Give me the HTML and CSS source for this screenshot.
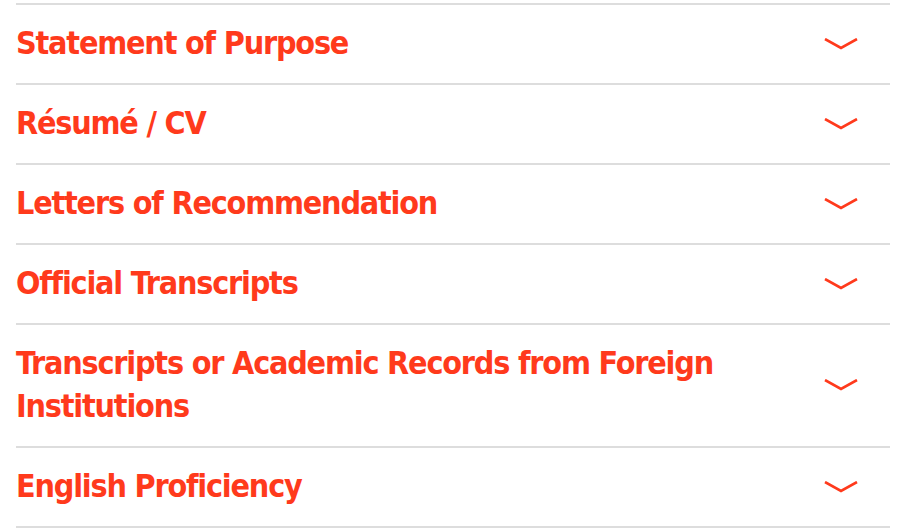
FILE: index.html
```html
<!DOCTYPE html>
<html lang="en">
<head>
  <meta charset="UTF-8">
  <meta name="viewport" content="width=device-width, initial-scale=1.0">
  <title>Application Materials</title>
  <link rel="stylesheet" href="styles.css">
</head>
<body>
  <div class="accordion">
    <div class="accordion-item">
      <h3 class="accordion-title">Statement of Purpose</h3>
      <svg class="chevron" viewBox="0 0 34 12"><polyline points="1,1 17,10 33,1"/></svg>
    </div>
    <div class="accordion-item">
      <h3 class="accordion-title">Résumé / CV</h3>
      <svg class="chevron" viewBox="0 0 34 12"><polyline points="1,1 17,10 33,1"/></svg>
    </div>
    <div class="accordion-item">
      <h3 class="accordion-title">Letters of Recommendation</h3>
      <svg class="chevron" viewBox="0 0 34 12"><polyline points="1,1 17,10 33,1"/></svg>
    </div>
    <div class="accordion-item">
      <h3 class="accordion-title">Official Transcripts</h3>
      <svg class="chevron" viewBox="0 0 34 12"><polyline points="1,1 17,10 33,1"/></svg>
    </div>
    <div class="accordion-item">
      <h3 class="accordion-title">Transcripts or Academic Records from Foreign Institutions</h3>
      <svg class="chevron" viewBox="0 0 34 12"><polyline points="1,1 17,10 33,1"/></svg>
    </div>
    <div class="accordion-item">
      <h3 class="accordion-title">English Proficiency</h3>
      <svg class="chevron" viewBox="0 0 34 12"><polyline points="1,1 17,10 33,1"/></svg>
    </div>
  </div>
</body>
</html>
```

FILE: styles.css
```css
/* Accordion list */
body {
  margin: 0;
  padding: 0;
  background: #ffffff;
  font-family: "DejaVu Sans Condensed", "DejaVu Sans", sans-serif;
  font-stretch: condensed;
}

.accordion {
  width: 874px;
  margin: 3px 0 0 16px;
  border-bottom: 2px solid #dddddd;
}

.accordion-item {
  display: flex;
  align-items: center;
  justify-content: space-between;
  border-top: 2px solid #dddddd;
  padding: 17px 0 18px;
}

.accordion-title {
  margin: 0;
  max-width: 760px;
  font-size: 32px;
  font-weight: bold;
  letter-spacing: -1.2px;
  line-height: 43px;
  color: #ff3a1c;
}

.chevron {
  width: 34px;
  height: 12px;
  margin-right: 32px;
  fill: none;
  stroke: #ff3a1c;
  stroke-width: 2.6;
}
```
